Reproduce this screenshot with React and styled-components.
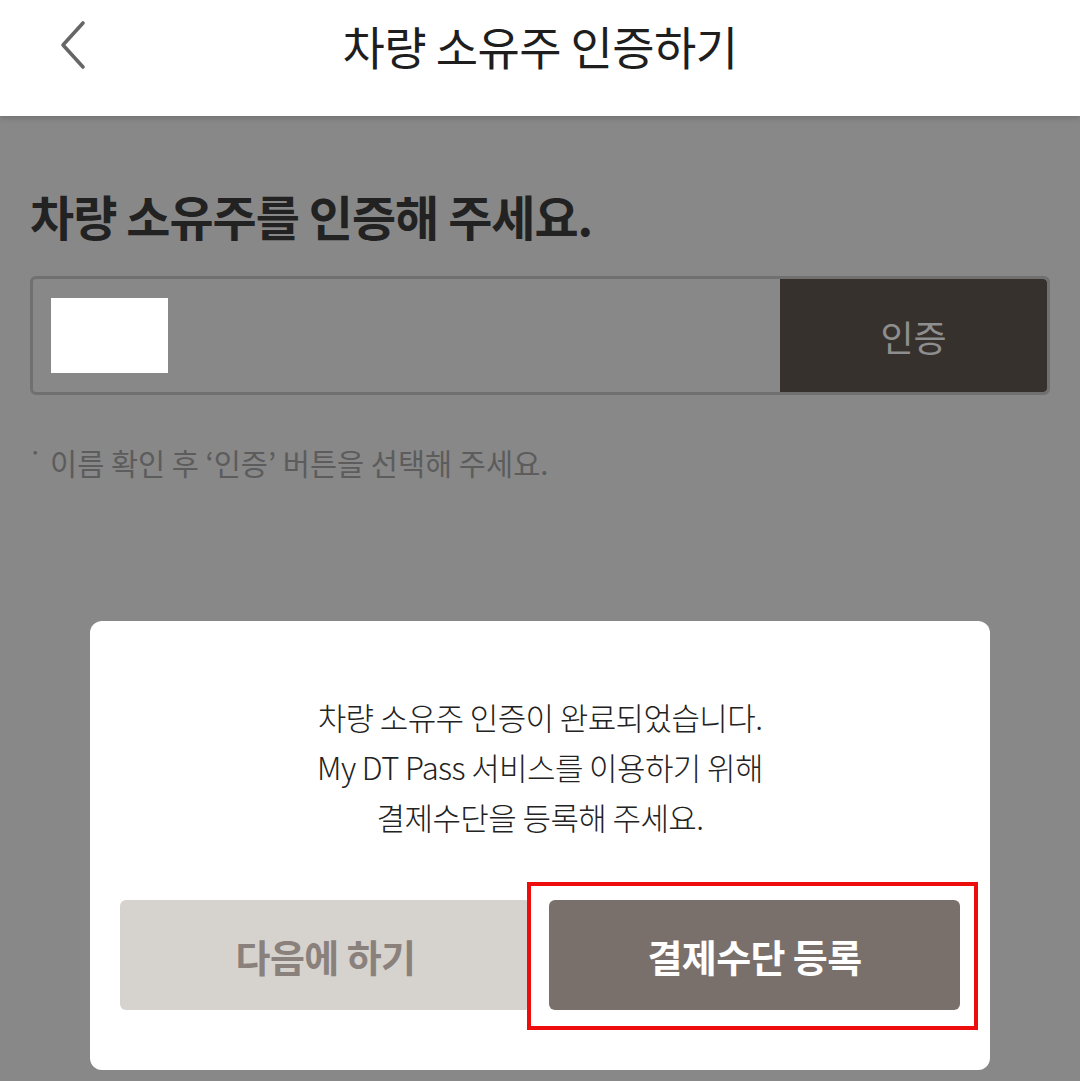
import React from "react";
import styled, { createGlobalStyle } from "styled-components";

const GlobalStyle = createGlobalStyle`
  html, body {
    margin: 0;
    padding: 0;
    background: #888888;
  }
  body {
    font-family: "Noto Sans CJK KR", "Noto Sans", sans-serif;
    color: #222;
  }
  * { box-sizing: border-box; }
`;

export default function App() {
  return (
    <Page>
      <GlobalStyle />
      <Header>
        <BackButton aria-label="뒤로">
          <svg width="30" height="50" viewBox="0 0 30 50" fill="none">
            <path d="M25 3 L5 25 L25 47" stroke="#666" strokeWidth="3.6" strokeLinecap="round" strokeLinejoin="round" />
          </svg>
        </BackButton>
        <Title>차량 소유주 인증하기</Title>
        <span />
      </Header>

      <Content>
        <Heading>차량 소유주를 인증해 주세요.</Heading>
        <InputRow>
          <NameField>
            <Redacted />
          </NameField>
          <VerifyButton>인증</VerifyButton>
        </InputRow>
        <Note>
          <Bullet>·</Bullet>
          이름 확인 후 ‘인증’ 버튼을 선택해 주세요.
        </Note>

        <Modal>
          <Message>
            차량 소유주 인증이 완료되었습니다.
            <br />
            My DT Pass 서비스를 이용하기 위해
            <br />
            결제수단을 등록해 주세요.
          </Message>
          <ButtonRow>
            <ModalButton $variant="later">다음에 하기</ModalButton>
            <Highlighted>
              <ModalButton $variant="primary">결제수단 등록</ModalButton>
              <RedBox />
            </Highlighted>
          </ButtonRow>
        </Modal>
      </Content>
    </Page>
  );
}

const Page = styled.div`
  width: 1080px;
  height: 1081px;
  overflow: hidden;
  display: flex;
  flex-direction: column;
`;

const Header = styled.header`
  height: 116px;
  flex-shrink: 0;
  background: #fff;
  display: grid;
  grid-template-columns: 1fr auto 1fr;
  align-items: start;
  padding-top: 17px;
  box-shadow: 0 2px 6px rgba(0, 0, 0, 0.18);
  position: relative;
  z-index: 2;
`;

const BackButton = styled.button`
  justify-self: start;
  margin-left: 58px;
  margin-top: 3px;
  padding: 0;
  border: 0;
  background: none;
  display: flex;
`;

const Title = styled.h1`
  margin: 0;
  font-size: 46px;
  line-height: 56px;
  font-weight: 400;
  color: #1e1e1e;
  letter-spacing: -0.6px;
`;

const Content = styled.main`
  flex: 1;
  position: relative;
  background: #888888;
  padding: 70px 30px 0;
`;

const Heading = styled.h2`
  margin: 0;
  font-size: 48px;
  line-height: 58px;
  font-weight: 700;
  color: #222;
  letter-spacing: -1px;
`;

const InputRow = styled.div`
  margin-top: 32px;
  height: 119px;
  border: 3px solid #707070;
  border-radius: 6px;
  display: flex;
  overflow: hidden;
`;

const NameField = styled.div`
  flex: 1;
  display: flex;
  align-items: center;
  padding-left: 18px;
`;

const Redacted = styled.div`
  width: 117px;
  height: 75px;
  background: #fff;
`;

const VerifyButton = styled.button`
  width: 267px;
  border: 0;
  border-radius: 0 4px 4px 0;
  background: #37312e;
  color: #8e8e8e;
  font-family: inherit;
  font-size: 36px;
  font-weight: 400;
  padding: 0;
`;

const Note = styled.p`
  margin: 46px 0 0;
  font-size: 29.5px;
  line-height: 42px;
  color: #5c5c5c;
  letter-spacing: 0;
  display: flex;
  align-items: flex-start;
`;

const Bullet = styled.span`
  width: 22px;
  font-size: 26px;
  line-height: 20px;
  margin-left: -2px;
`;

const Modal = styled.section`
  position: absolute;
  left: 90px;
  top: 505px;
  width: 900px;
  background: #fff;
  border-radius: 12px;
  padding: 71px 30px 60px;
`;

const Message = styled.p`
  margin: 0;
  text-align: center;
  font-size: 31px;
  line-height: 50px;
  font-weight: 300;
  color: #222;
  letter-spacing: -0.6px;
`;

const ButtonRow = styled.div`
  margin-top: 58px;
  display: grid;
  grid-template-columns: 1fr 1fr;
  gap: 18px;
`;

const Highlighted = styled.div`
  position: relative;
  display: flex;
`;

const ModalButton = styled.button`
  flex: 1;
  height: 110px;
  border: 0;
  border-radius: 6px;
  font-family: inherit;
  font-size: 38px;
  font-weight: 700;
  letter-spacing: -0.6px;
  background: ${(p) => (p.$variant === "primary" ? "#7a706b" : "#d6d2cd")};
  color: ${(p) => (p.$variant === "primary" ? "#ffffff" : "#8a817c")};
`;

const RedBox = styled.div`
  position: absolute;
  top: -18px;
  left: -22px;
  right: -18px;
  bottom: -20px;
  border: 4px solid #ee0d0d;
  pointer-events: none;
`;
